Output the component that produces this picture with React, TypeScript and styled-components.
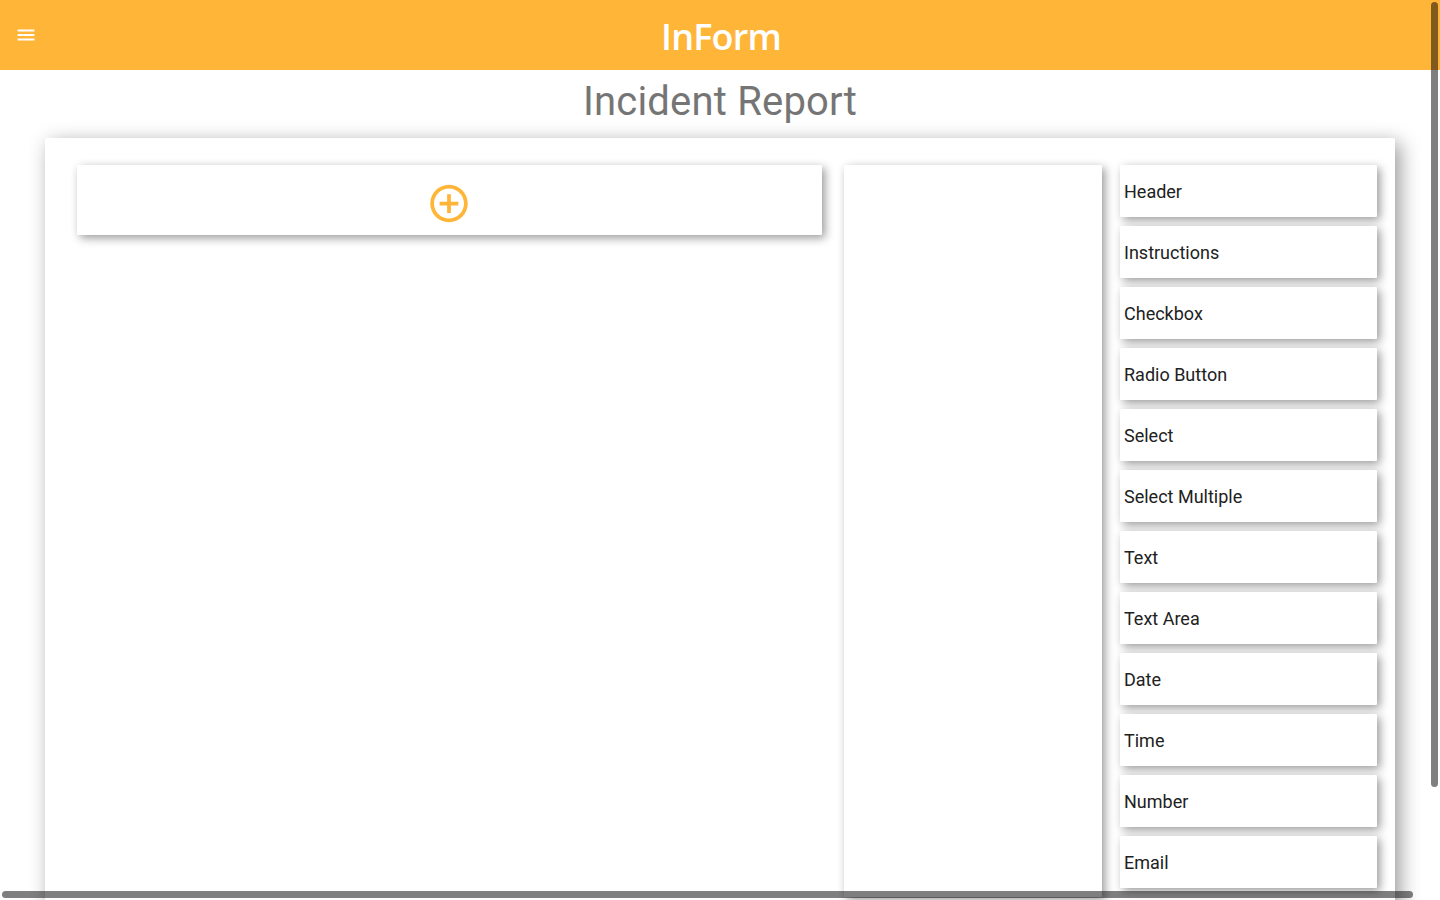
import React from 'react';
import styled, { createGlobalStyle } from 'styled-components';
import { MdAddCircleOutline } from 'react-icons/md';

const GlobalStyle = createGlobalStyle`
  * { box-sizing: border-box; }
  body { margin: 0; background: #fff; overflow: hidden; font-family: Roboto, 'Liberation Sans', sans-serif; }
`;

const Page = styled.div`
  position: relative;
  height: 900px;
  overflow: hidden;
`;

const TopBar = styled.header`
  display: grid;
  grid-template-columns: 52px 1fr 52px;
  align-items: center;
  height: 70px;
  background: #ffb538;
  color: #fff;
`;

const MenuButton = styled.button`
  display: flex;
  margin: 0;
  padding: 0 0 0 15px;
  border: 0;
  background: none;
  color: inherit;
`;

const Brand = styled.div`
  font: 600 36px/48px 'Open Sans', sans-serif;
  letter-spacing: -0.8px;
  text-align: center;
  padding: 3px 0 0 2px;
`;

const FormTitle = styled.h1`
  margin: 0;
  height: 68px;
  font-size: 40px;
  font-weight: 400;
  line-height: 64px;
  letter-spacing: 0.2px;
  text-align: center;
  color: #757575;
`;

const Sheet = styled.main`
  display: grid;
  grid-template-columns: 745px 258px 257px;
  column-gap: 22px;
  align-items: start;
  width: 1350px;
  height: 960px;
  margin: 0 auto;
  padding: 27px 18px 0 32px;
  border-radius: 2px;
  background: #fff;
  box-shadow: 5px 5px 20px #999;
`;

const Card = styled.div`
  border-radius: 1px;
  background: #fff;
  box-shadow: 3px 3px 10px #999;
`;

const DropZone = styled(Card)`
  display: flex;
  justify-content: center;
  padding-top: 16px;
  height: 70px;
  color: #ffb538;

  svg {
    transform: translateX(-0.5px);
  }
`;

const Preview = styled(Card)`
  height: 732px;
`;

const FieldList = styled.div`
  display: flex;
  flex-direction: column;
  gap: 9px;
  margin-left: -4px;
  width: 257px;
`;

const FieldItem = styled(Card)`
  height: 52px;
  padding-left: 4px;
  font-size: 18px;
  line-height: 53px;
  color: #212121;
`;

const Scrollbar = styled.div<{ $vertical?: boolean }>`
  position: absolute;
  border-radius: 4px;
  background: rgba(0, 0, 0, 0.5);
  ${({ $vertical }) =>
    $vertical
      ? 'top: 2px; right: 2px; width: 7px; height: 785px;'
      : 'left: 2px; bottom: 2px; width: 1411px; height: 7px;'}
`;

const fields = [
  'Header', 'Instructions', 'Checkbox', 'Radio Button', 'Select', 'Select Multiple',
  'Text', 'Text Area', 'Date', 'Time', 'Number', 'Email',
];

function MenuIcon() {
  return (
    <svg width="22" height="22" viewBox="0 0 22 22" fill="none" stroke="currentColor" strokeWidth="2">
      <path d="M2.6 6.5h16.8M2.6 11h16.8M2.6 15.5h16.8" />
    </svg>
  );
}

export default function App() {
  return (
    <Page>
      <GlobalStyle />
      <TopBar>
        <MenuButton aria-label="Menu"><MenuIcon /></MenuButton>
        <Brand>InForm</Brand>
      </TopBar>
      <FormTitle>Incident Report</FormTitle>
      <Sheet>
        <DropZone><MdAddCircleOutline size={45} /></DropZone>
        <Preview />
        <FieldList>
          {fields.map((name) => <FieldItem key={name}>{name}</FieldItem>)}
        </FieldList>
      </Sheet>
      <Scrollbar $vertical />
      <Scrollbar />
    </Page>
  );
}
